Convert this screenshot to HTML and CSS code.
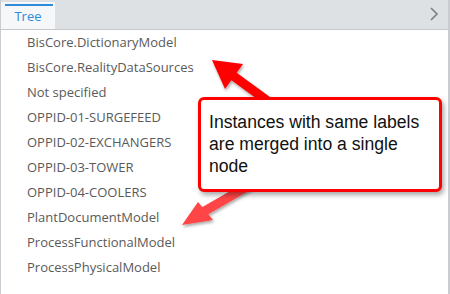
FILE: index.html
```html
<!DOCTYPE html>
<html lang="en">
<head>
  <meta charset="UTF-8" />
  <title>Tree</title>
  <link rel="stylesheet" href="styles.css">
</head>
<body>

<div class="panel">
  <!-- Tab strip -->
  <div class="tab-bar">
    <div class="tab active">Tree</div>
    <svg class="chevron" width="10" height="14" viewBox="0 0 10 14">
      <polyline points="2,1 8,7 2,13" fill="none" stroke="#7a7f85" stroke-width="1.6" />
    </svg>
  </div>

  <!-- Tree nodes -->
  <ul class="tree">
    <li>BisCore.DictionaryModel</li>
    <li>BisCore.RealityDataSources</li>
    <li>Not specified</li>
    <li>OPPID-01-SURGEFEED</li>
    <li>OPPID-02-EXCHANGERS</li>
    <li>OPPID-03-TOWER</li>
    <li>OPPID-04-COOLERS</li>
    <li>PlantDocumentModel</li>
    <li>ProcessFunctionalModel</li>
    <li>ProcessPhysicalModel</li>
  </ul>

  <!-- Annotation arrows -->
  <svg class="arrows" width="450" height="294" viewBox="0 0 450 294">
    <defs>
      <filter id="shadow" x="-20%" y="-20%" width="140%" height="140%">
        <feDropShadow dx="1" dy="2" stdDeviation="1.5" flood-color="#000" flood-opacity="0.35" />
      </filter>
    </defs>
    <g filter="url(#shadow)">
      <line x1="232" y1="75" x2="280" y2="110" stroke="#f00" stroke-width="9" />
      <polygon points="212,60 243,64 225,89" fill="#f00" />
    </g>
    <g filter="url(#shadow)">
      <line x1="203" y1="212" x2="255" y2="182" stroke="#f44" stroke-width="9" />
      <polygon points="182,225 198,202 213,220" fill="#f44" />
    </g>
  </svg>

  <!-- Callout -->
  <div class="callout">Instances with same labels are merged into a single node</div>
</div>

</body>
</html>
```

FILE: styles.css
```css
* { margin: 0; padding: 0; box-sizing: border-box; }

html, body {
  width: 450px;
  height: 294px;
  overflow: hidden;
  background: #fff;
  font-family: 'Open Sans', sans-serif;
}

.panel {
  position: relative;
  width: 450px;
  height: 294px;
  border-left: 1px solid #c9cdd1;
  border-right: 2px solid #c9cdd1;
}

.tab-bar {
  display: flex;
  align-items: flex-end;
  justify-content: space-between;
  height: 30px;
  background: #dee1e4;
  border-bottom: 1px solid #c4c8cc;
}

.tab {
  width: 54px;
  height: 27px;
  background: #f5f7f8;
  color: #2d8bd8;
  font-size: 13px;
  text-align: center;
  line-height: 22px;
  border-top: 3px solid #f5f7f8;
  position: relative;
}

.tab.active::before {
  content: "";
  position: absolute;
  top: -1px;
  left: 4px;
  right: 2px;
  height: 2px;
  background: #2d8bd8;
}

.chevron {
  margin: 0 9px 8px 0;
}

.tree {
  list-style: none;
  padding-left: 26px;
}

.tree li {
  height: 25px;
  line-height: 25px;
  font-size: 13px;
  color: #5a5a5a;
}

.arrows {
  position: absolute;
  top: 0;
  left: -1px;
  pointer-events: none;
}

.callout {
  position: absolute;
  left: 197px;
  top: 97px;
  width: 244px;
  height: 95px;
  padding: 11px 8px 0 8px;
  background: #fff;
  border: 3px solid #f00;
  border-radius: 6px;
  box-shadow: 2px 3px 5px rgba(0, 0, 0, 0.35);
  font-family: 'Liberation Sans', Arial, sans-serif;
  font-size: 17.6px;
  line-height: 22px;
  color: #111;
}
```
